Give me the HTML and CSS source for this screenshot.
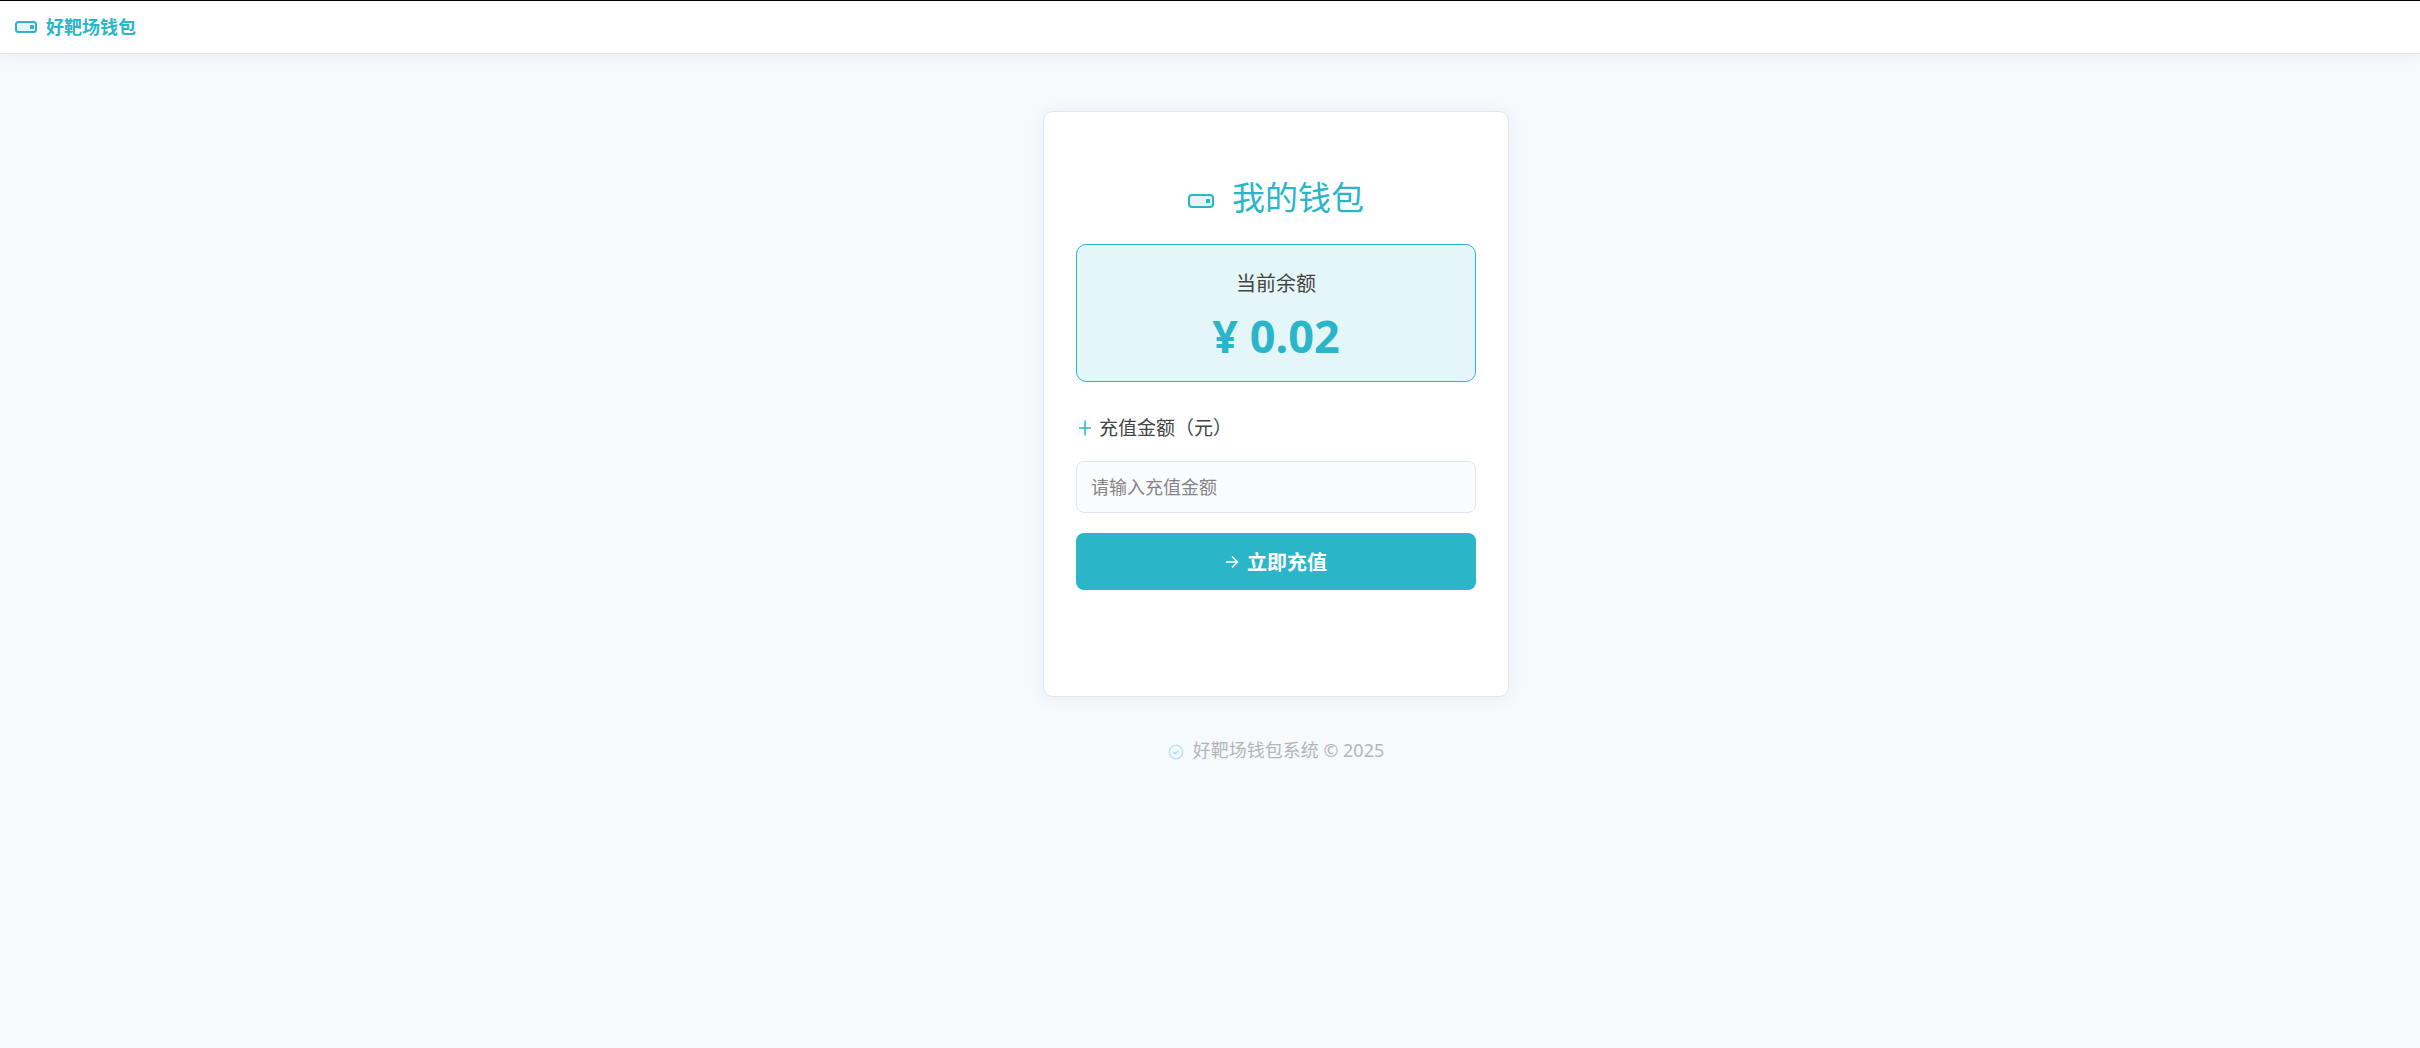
FILE: index.html
```html
<!DOCTYPE html>
<html lang="zh-CN">
<head>
    <meta charset="UTF-8">
    <meta name="viewport" content="width=device-width, initial-scale=1.0">
    <title>我的钱包</title>
    <link rel="stylesheet" href="styles.css">
</head>
<body>
    <header class="navbar">
        <svg class="navbar-icon" viewBox="0 0 22 12" aria-hidden="true">
            <rect x="1" y="1" width="20" height="10" rx="2.5" fill="#e4f6f8" stroke="#2ab5c8" stroke-width="2"/>
            <rect x="15" y="4" width="4" height="4" rx="1" fill="#2ab5c8"/>
        </svg>
        <span class="navbar-title">好靶场钱包</span>
    </header>

    <main class="page">
        <section class="wallet-card">
            <h1 class="wallet-title">
                <svg class="wallet-icon" viewBox="0 0 26 14" aria-hidden="true">
                    <rect x="1" y="1" width="24" height="12" rx="3" fill="#e4f6f8" stroke="#2ab5c8" stroke-width="2"/>
                    <rect x="18" y="5" width="4" height="4" rx="0.5" fill="#2ab5c8"/>
                </svg>
                我的钱包
            </h1>

            <div class="balance-box">
                <div class="balance-label">当前余额</div>
                <div class="balance-amount">¥ 0.02</div>
            </div>

            <form class="recharge-form">
                <label class="recharge-label" for="amount">
                    <svg class="plus-icon" viewBox="0 0 16 16" aria-hidden="true">
                        <path d="M8 .5v15M2 8h12" fill="none" stroke="#2ab5c8" stroke-width="1.5"/>
                    </svg>
                    充值金额（元）
                </label>
                <input class="recharge-input" type="text" id="amount" placeholder="请输入充值金额">
                <button class="recharge-button" type="button">
                    <svg class="arrow-icon" viewBox="0 0 14 14" aria-hidden="true">
                        <path d="M1 7h11.5M7 1.5L12.5 7 7 12.5" fill="none" stroke="#fff" stroke-width="1.5"/>
                    </svg>
                    立即充值
                </button>
            </form>
        </section>

        <footer class="footer">
            <svg class="check-icon" viewBox="0 0 16 16" aria-hidden="true">
                <circle cx="8" cy="8" r="6.8" fill="none" stroke="#bbdefb" stroke-width="1.3"/>
                <path d="M5.2 8l2 1.8 3.4-3.2" fill="none" stroke="#a3d3fa" stroke-width="1.3"/>
            </svg>
            好靶场钱包系统 © 2025
        </footer>
    </main>
</body>
</html>
```
FILE: styles.css
```css
* {
    margin: 0;
    padding: 0;
    box-sizing: border-box;
}

body {
    background: #f6fafd;
    border-top: 1px solid #000;
    color: #444;
    font-family: 'Noto Sans', 'Noto Sans CJK SC', sans-serif;
    font-size: 18px;
    line-height: 24px;
    min-height: 100vh;
}

svg {
    flex: none;
}

.navbar {
    display: flex;
    align-items: center;
    gap: 9px;
    height: 53px;
    padding: 0 15px;
    background: #fff;
    border-bottom: 1px solid #e0e6f0;
    box-shadow: 0 2px 12px rgba(60, 80, 140, 0.07);
}

.navbar-icon {
    width: 22px;
    height: 12px;
}

.navbar-title {
    color: #2ab5c8;
    font-weight: 700;
}

.page {
    display: flex;
    flex-direction: column;
    align-items: center;
    padding: 57px 0 40px 132px;
}

.wallet-card {
    width: 100%;
    max-width: 466px;
    padding: 62px 32px 106px;
    background: #fff;
    border: 1px solid #e0e6f0;
    border-radius: 10px;
    box-shadow: 0 2px 16px rgba(60, 80, 140, 0.07);
}

.wallet-title {
    display: flex;
    align-items: center;
    justify-content: center;
    gap: 18px;
    margin-bottom: 22px;
    color: #2ab5c8;
    font-size: 33px;
    font-weight: 400;
    line-height: 48px;
}

.wallet-icon {
    width: 26px;
    height: 14px;
    margin-top: 6px;
}

.balance-box {
    padding: 24px 16px 8px;
    background: #e4f6f8;
    border: 1px solid #2ab5c8;
    border-radius: 10px;
    text-align: center;
}

.balance-label {
    font-size: 20px;
    line-height: 30px;
}

.balance-amount {
    color: #2ab5c8;
    font-size: 45px;
    font-weight: 700;
    line-height: 74px;
}

.recharge-form {
    display: flex;
    flex-direction: column;
    margin-top: 34px;
}

.recharge-label {
    display: flex;
    align-items: center;
    gap: 6px;
    margin-bottom: 21px;
    padding-left: 1px;
    font-size: 19px;
}

.plus-icon {
    width: 16px;
    height: 16px;
}

.recharge-input {
    width: 100%;
    height: 52px;
    padding: 0 14px;
    background: #fafbfd;
    border: 1px solid #e0e6f0;
    border-radius: 8px;
    color: #444;
    font: inherit;
}

.recharge-input::placeholder {
    color: #858585;
}

.recharge-input:focus {
    outline: none;
    border-color: #2ab5c8;
}

.recharge-button {
    display: flex;
    align-items: center;
    justify-content: center;
    gap: 8px;
    height: 57px;
    margin-top: 20px;
    background: #2ab5c8;
    border: none;
    border-radius: 8px;
    color: #fff;
    cursor: pointer;
    font-family: inherit;
    font-size: 20px;
    font-weight: 700;
}

.recharge-button:hover {
    background: #239fb0;
}

.arrow-icon {
    width: 14px;
    height: 14px;
}

.footer {
    display: flex;
    align-items: center;
    gap: 9px;
    margin-top: 41px;
    color: #b5b5b5;
}

.check-icon {
    width: 16px;
    height: 16px;
    margin-top: 4px;
}
```
